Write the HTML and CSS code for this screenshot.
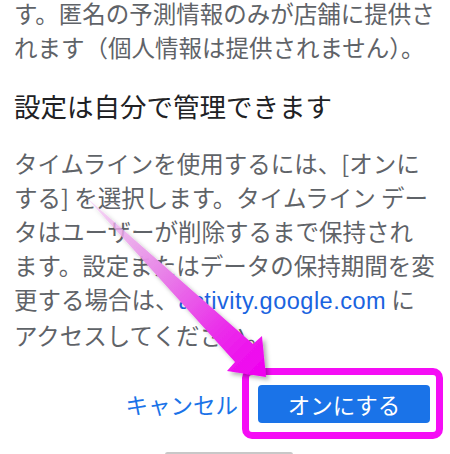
FILE: index.html
```html
<!DOCTYPE html>
<html lang="ja">
<head>
<meta charset="utf-8">
<link rel="stylesheet" href="styles.css">
</head>
<body>
<div class="page">
  <p class="lead"><span class="lead-first">す。匿名の予測情報のみが店舗に提供さ</span><span class="lead-second">れます（個人情報は提供されません）。</span></p>
  <h2 class="title">設定は自分で管理できます</h2>
  <p class="body">タイムラインを使用するには、[オンに<br>する] を選択します。タイムライン デー<br>タはユーザーが削除するまで保持され<br>ます。設定またはデータの保持期間を変<br>更する場合は、<span class="link">activity.google.com</span> に<br>アクセスしてください。</p>
  <div class="actions">
    <span class="cancel">キャンセル</span>
    <span class="primary-wrap"><span class="primary">オンにする</span></span>
  </div>
  <div class="indicator"></div>
</div>
<svg class="arrow" width="450" height="454" viewBox="0 0 450 454">
  <defs>
    <linearGradient id="ag" x1="88" y1="198" x2="262" y2="372" gradientUnits="userSpaceOnUse">
      <stop offset="0" stop-color="#f4c8f4" stop-opacity="0.6"/>
      <stop offset="0.4" stop-color="#e88ae8"/>
      <stop offset="0.75" stop-color="#ea30ea"/>
      <stop offset="1" stop-color="#f000f0"/>
    </linearGradient>
    <filter id="sh" x="-20%" y="-20%" width="140%" height="140%">
      <feDropShadow dx="3" dy="3" stdDeviation="2" flood-color="#000" flood-opacity="0.3"/>
    </filter>
  </defs>
  <polygon points="86,197 253,344 262,336 266,377 227,371 235,362" fill="url(#ag)" filter="url(#sh)"/>
</svg>
</body>
</html>
```

FILE: styles.css
```css
html, body {
  margin: 0;
  padding: 0;
  background: #ffffff;
}
body {
  width: 450px;
  height: 454px;
  overflow: hidden;
  position: relative;
  font-family: "Noto Sans CJK JP", "Noto Sans", sans-serif;
}
.page {
  padding: 0 14px;
}
.lead, .body {
  font-size: 23.5px;
  line-height: 34px;
  color: #5f6368;
  white-space: nowrap;
  margin: 0;
}
.lead-first {
  display: block;
  line-height: 27px;
}
.lead-second {
  display: block;
  margin-top: 3px;
}
.title {
  font-size: 26.5px;
  line-height: 34px;
  font-weight: 400;
  color: #202124;
  margin: 25px 0 0 0;
  white-space: nowrap;
}
.body {
  margin-top: 22.5px;
}
.link {
  color: #1a63e0;
  font-family: "Liberation Sans", Arial, sans-serif;
  letter-spacing: 0.5px;
}
.actions {
  display: flex;
  justify-content: flex-end;
  align-items: center;
  margin-top: 33px;
  padding-right: 6px;
}
.cancel {
  font-size: 22.5px;
  color: #1a73e8;
  line-height: 38px;
  margin-right: 20px;
}
.primary-wrap {
  position: relative;
  display: block;
}
.primary-wrap::after {
  content: "";
  position: absolute;
  left: -16px;
  top: -17px;
  right: -13px;
  bottom: -16px;
  border: 7px solid #f50df5;
  border-radius: 10px;
}
.primary {
  display: block;
  width: 172px;
  height: 38px;
  line-height: 38px;
  text-align: center;
  background: #1a73e8;
  color: #ffffff;
  font-size: 22.5px;
  border-radius: 4px;
}
.indicator {
  width: 128px;
  height: 5px;
  background: #c8c8c8;
  border-radius: 3px;
  margin: 29px 0 0 151px;
}
.arrow {
  position: absolute;
  left: 0;
  top: 0;
  pointer-events: none;
}
```
